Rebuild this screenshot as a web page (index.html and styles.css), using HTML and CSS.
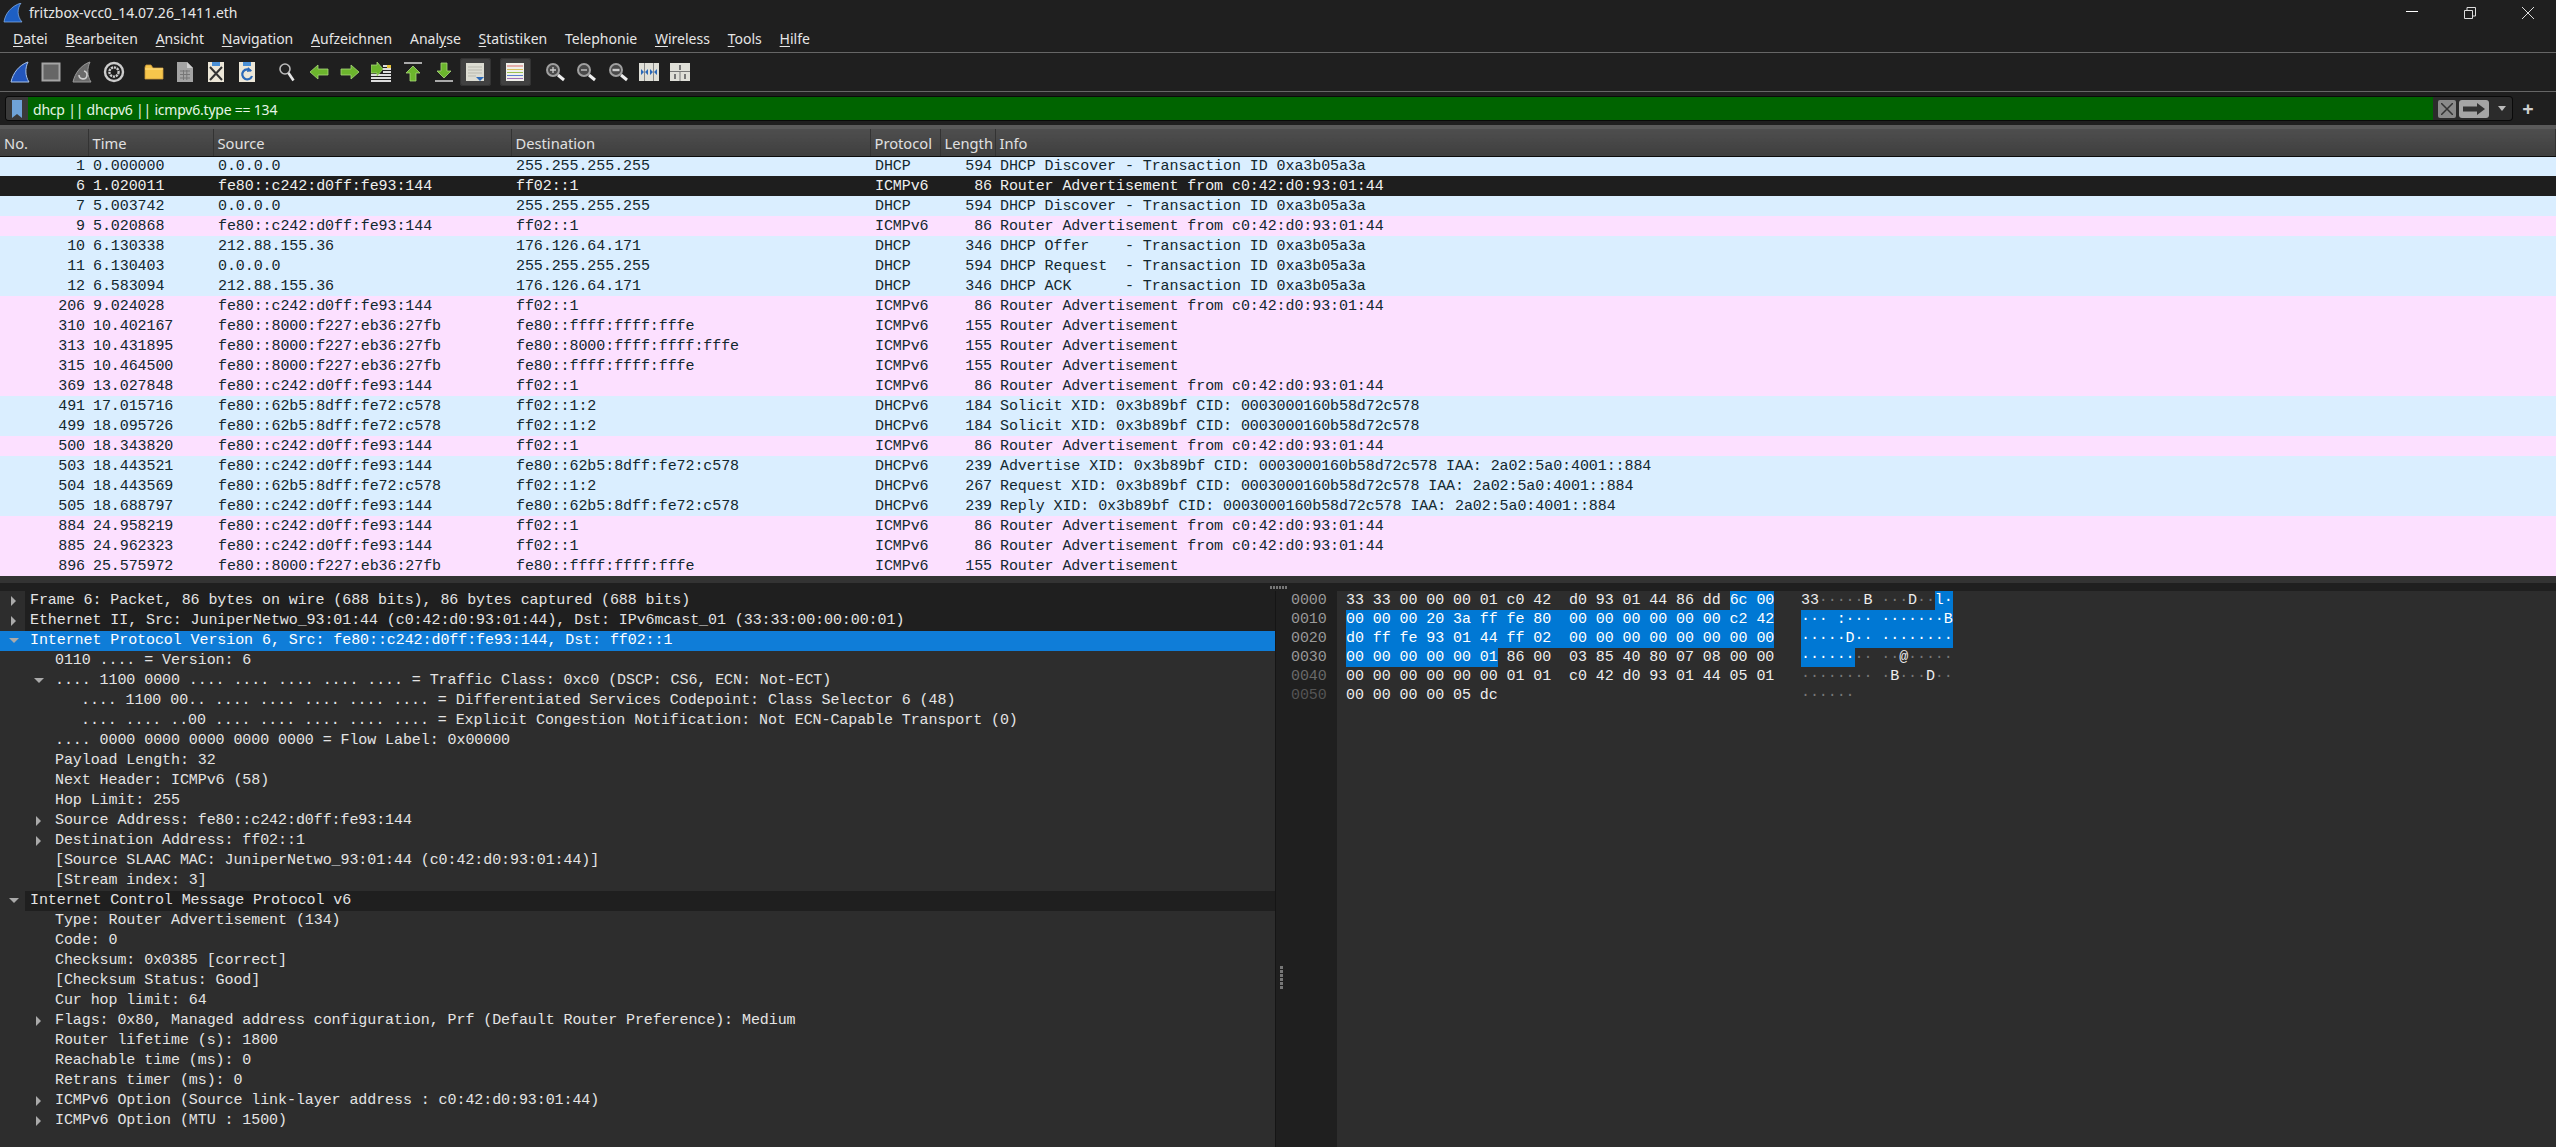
FILE: index.html
```html
<!DOCTYPE html>
<html lang="de">
<head>
  <meta charset="UTF-8" />
  <title>fritzbox-vcc0_14.07.26_1411.eth</title>
  <link rel="stylesheet" href="styles.css">
</head>
<body>
  <!-- Title bar -->
  <div class="titlebar">
    <svg class="app-icon" width="20" height="20" viewBox="0 0 20 20"><path d="M1 19C2 11 8 3 18 0C14 6 14 13 19 19Z" fill="#1d5fc4" stroke="#8db4e8" stroke-width=".7"/></svg>
    <span class="title-text">fritzbox-vcc0_14.07.26_1411.eth</span>
    <div class="window-btns">
      <svg width="14" height="14" viewBox="0 0 14 14"><path d="M1 5.5H13" stroke="#fff" stroke-width="1"/></svg>
      <svg width="14" height="14" viewBox="0 0 14 14"><path d="M1.5 4.5H9.5V12.5H1.5ZM4 4V1.5H12.5V10H10" fill="none" stroke="#ddd" stroke-width="1"/></svg>
      <svg width="14" height="14" viewBox="0 0 14 14"><path d="M1 1L13 13M13 1L1 13" stroke="#ddd" stroke-width="1"/></svg>
    </div>
  </div>

  <!-- Menu -->
  <div class="menubar">
    <span><u>D</u>atei</span>
    <span><u>B</u>earbeiten</span>
    <span><u>A</u>nsicht</span>
    <span><u>N</u>avigation</span>
    <span><u>A</u>ufzeichnen</span>
    <span>Anal<u>y</u>se</span>
    <span><u>S</u>tatistiken</span>
    <span>Telephonie</span>
    <span><u>W</u>ireless</span>
    <span><u>T</u>ools</span>
    <span><u>H</u>ilfe</span>
  </div>

  <!-- Toolbar -->
  <div class="toolbar">
    <div class="tool"><svg width="20" height="22" viewBox="0 0 20 22"><path d="M1 21C3 12 9 4 18 1C15 7 15 15 19 21Z" fill="#2356bb" stroke="#a9c3e8" stroke-width="1"/></svg></div>
    <div class="tool"><svg width="20" height="20" viewBox="0 0 20 20"><rect x="1.5" y="1.5" width="17" height="17" fill="#666" stroke="#a5a5a5" stroke-width="2"/></svg></div>
    <div class="tool"><svg width="20" height="22" viewBox="0 0 20 22"><path d="M1 21C3 12 9 4 18 1C15 7 15 15 19 21Z" fill="#6b6b6b" stroke="#999" stroke-width="1"/><path d="M7 14A4 4 0 1 0 12 10" fill="none" stroke="#ccc" stroke-width="1.6"/></svg></div>
    <div class="tool"><svg width="22" height="22" viewBox="0 0 22 22"><circle cx="11" cy="11" r="9" fill="none" stroke="#ccc" stroke-width="2.4"/><circle cx="11" cy="11" r="4.6" fill="none" stroke="#ccc" stroke-width="2.4" stroke-dasharray="2.2 .8"/></svg></div>
    <div class="tool-sep"></div>
    <div class="tool"><svg width="20" height="16" viewBox="0 0 20 16"><path d="M1 3V15H19V4H9L7 1H2Z" fill="#f6c64c" stroke="#c9973a" stroke-width=".8"/><path d="M1 5H19" stroke="#ffe08a"/></svg></div>
    <div class="tool"><svg width="18" height="22" viewBox="0 0 18 22"><path d="M1 1H11L17 7V21H1Z" fill="#a4a4a4"/><path d="M11 1V7H17" fill="#d0d0d0"/><path d="M4 10H14M4 13.500H14M4 17H14M7.500 9V19M10.800 9V19" stroke="#777" stroke-width="1"/></svg></div>
    <div class="tool"><svg width="18" height="22" viewBox="0 0 18 22"><path d="M1 1H17V21H1Z" fill="#ece7d8"/><path d="M5 1H13V5H5Z" fill="#4a90d6"/><path d="M3 6L15 19M15 6L3 19" stroke="#333" stroke-width="2"/></svg></div>
    <div class="tool"><svg width="18" height="22" viewBox="0 0 18 22"><path d="M1 1H17V21H1Z" fill="#ece7d8"/><path d="M5 1H13V5H5Z" fill="#4a90d6"/><path d="M13 10A5 5 0 1 0 14 15" fill="none" stroke="#2a68b8" stroke-width="2.200"/><path d="M10 6L14 10L9 11Z" fill="#2a68b8"/></svg></div>
    <div class="tool-sep"></div>
    <div class="tool"><svg width="18" height="20" viewBox="0 0 18 20"><circle cx="7" cy="7" r="5" fill="#222" stroke="#bbb" stroke-width="1.600"/><path d="M10.500 11L15.500 18.500" stroke="#e6e6e6" stroke-width="2.600"/></svg></div>
    <div class="tool"><svg width="20" height="16" viewBox="0 0 20 16"><path d="M1 8L9 1V5H19V11H9V15Z" fill="#6cb52d" stroke="#a8d87a" stroke-width=".8"/></svg></div>
    <div class="tool"><svg width="20" height="16" viewBox="0 0 20 16"><path d="M19 8L11 1V5H1V11H11V15Z" fill="#6cb52d" stroke="#a8d87a" stroke-width=".8"/></svg></div>
    <div class="tool"><svg width="20" height="20" viewBox="0 0 20 20"><path d="M0 13H20M0 16H20M0 19H20M12 4H20M12 7H20M12 10H20" stroke="#ddd" stroke-width="2"/><path d="M16 3H20V6H16Z" fill="#e8c53a"/><path d="M12 7L6 0V3H0V11H6V14Z" fill="#6cb52d" stroke="#a8d87a" stroke-width=".8"/></svg></div>
    <div class="tool"><svg width="18" height="20" viewBox="0 0 18 20"><path d="M0 1H18" stroke="#aaa" stroke-width="2"/><path d="M9 4L16 11H12V19H6V11H2Z" fill="#6cb52d" stroke="#a8d87a" stroke-width=".8"/></svg></div>
    <div class="tool"><svg width="18" height="20" viewBox="0 0 18 20"><path d="M0 19H18" stroke="#aaa" stroke-width="2"/><path d="M9 16L16 9H12V1H6V9H2Z" fill="#6cb52d" stroke="#a8d87a" stroke-width=".8"/></svg></div>
    <div class="tool checked"><svg width="20" height="20" viewBox="0 0 20 20"><path d="M1 1H19V19H1Z" fill="#dcdcd2"/><path d="M3 5H17M3 8H17M3 11H17M3 14H11" stroke="#b9b9ae"/><path d="M11 15H19L15 19Z" fill="#2a68b8"/></svg></div>
    <div class="tool-sep"></div>
    <div class="tool checked"><svg width="20" height="20" viewBox="0 0 20 20"><rect x="1" y="1" width="18" height="18" fill="#f0f0ea"/><path d="M2 4H18" stroke="#d96a6a"/><path d="M2 7.500H18" stroke="#d8c060"/><path d="M2 10.500H18" stroke="#9cc050"/><path d="M2 13.500H18" stroke="#5a7fd0"/><path d="M2 16.500H18" stroke="#a070b8"/></svg></div>
    <div class="tool-sep"></div>
    <div class="tool"><svg width="20" height="20" viewBox="0 0 20 20"><circle cx="8" cy="8" r="6" fill="#4a4a4a" stroke="#a0a0a0" stroke-width="2"/><path d="M5 8H11M8 5V11" stroke="#ccc" stroke-width="1.300"/><path d="M13 13L19 18" stroke="#eee" stroke-width="3"/></svg></div>
    <div class="tool"><svg width="20" height="20" viewBox="0 0 20 20"><circle cx="8" cy="8" r="6" fill="#4a4a4a" stroke="#a0a0a0" stroke-width="2"/><path d="M5 8H11" stroke="#ccc" stroke-width="1.300"/><path d="M13 13L19 18" stroke="#eee" stroke-width="3"/></svg></div>
    <div class="tool"><svg width="20" height="20" viewBox="0 0 20 20"><circle cx="8" cy="8" r="6" fill="#4a4a4a" stroke="#a0a0a0" stroke-width="2"/><path d="M4.500 8H11.500" stroke="#ccc" stroke-width="2.400"/><path d="M13 13L19 18" stroke="#eee" stroke-width="3"/></svg></div>
    <div class="tool"><svg width="20" height="18" viewBox="0 0 20 18"><rect width="20" height="18" fill="#dfdfd8"/><path d="M5.500 0V18M14.500 0V18" stroke="#888"/><path d="M2 6L5 9L2 12ZM9 6L6 9L9 12ZM11 6L14 9L11 12ZM18 6L15 9L18 12Z" fill="#2a68b8"/></svg></div>
    <div class="tool"><svg width="20" height="18" viewBox="0 0 20 18"><rect width="20" height="18" fill="#dfdfd8"/><path d="M0 8.500H20M10 8.500V18" stroke="#777"/><path d="M9 2H11V7H9ZM4 11H6V16H4ZM14 11H16V16H14Z" fill="#777"/></svg></div>
  </div>

  <!-- Display filter -->
  <div class="filterbar">
    <div class="filter-box">
      <div class="filter-bookmark"><svg width="10" height="18" viewBox="0 0 10 18"><path d="M0 0H10V18L5 14L0 18Z" fill="#6fa3d8"/></svg></div>
      <div class="filter-input">dhcp || dhcpv6 || icmpv6.type == 134</div>
      <div class="filter-clear"><svg width="12" height="12" viewBox="0 0 12 12"><path d="M0 0L12 12M12 0L0 12" stroke="#333" stroke-width="1.500"/></svg></div>
      <div class="filter-apply"><svg width="22" height="12" viewBox="0 0 22 12"><path d="M0 3.500H14V0L22 6L14 12V8.500H0Z" fill="#333"/></svg></div>
      <div class="filter-drop"></div>
    </div>
    <div class="filter-plus">+</div>
  </div>

  <!-- Packet list -->
  <table class="packets">
    <colgroup>
      <col class="c-no"><col class="c-time"><col class="c-src"><col class="c-dst"><col class="c-proto"><col class="c-len"><col>
    </colgroup>
    <thead>
      <tr><th>No.</th><th>Time</th><th>Source</th><th>Destination</th><th>Protocol</th><th>Length</th><th>Info</th></tr>
    </thead>
    <tbody>
      <tr class="udp"><td>1</td><td>0.000000</td><td>0.0.0.0</td><td>255.255.255.255</td><td>DHCP</td><td>594</td><td>DHCP Discover - Transaction ID 0xa3b05a3a</td></tr>
      <tr class="sel"><td>6</td><td>1.020011</td><td>fe80::c242:d0ff:fe93:144</td><td>ff02::1</td><td>ICMPv6</td><td>86</td><td>Router Advertisement from c0:42:d0:93:01:44</td></tr>
      <tr class="udp"><td>7</td><td>5.003742</td><td>0.0.0.0</td><td>255.255.255.255</td><td>DHCP</td><td>594</td><td>DHCP Discover - Transaction ID 0xa3b05a3a</td></tr>
      <tr class="icmp"><td>9</td><td>5.020868</td><td>fe80::c242:d0ff:fe93:144</td><td>ff02::1</td><td>ICMPv6</td><td>86</td><td>Router Advertisement from c0:42:d0:93:01:44</td></tr>
      <tr class="udp"><td>10</td><td>6.130338</td><td>212.88.155.36</td><td>176.126.64.171</td><td>DHCP</td><td>346</td><td>DHCP Offer    - Transaction ID 0xa3b05a3a</td></tr>
      <tr class="udp"><td>11</td><td>6.130403</td><td>0.0.0.0</td><td>255.255.255.255</td><td>DHCP</td><td>594</td><td>DHCP Request  - Transaction ID 0xa3b05a3a</td></tr>
      <tr class="udp"><td>12</td><td>6.583094</td><td>212.88.155.36</td><td>176.126.64.171</td><td>DHCP</td><td>346</td><td>DHCP ACK      - Transaction ID 0xa3b05a3a</td></tr>
      <tr class="icmp"><td>206</td><td>9.024028</td><td>fe80::c242:d0ff:fe93:144</td><td>ff02::1</td><td>ICMPv6</td><td>86</td><td>Router Advertisement from c0:42:d0:93:01:44</td></tr>
      <tr class="icmp"><td>310</td><td>10.402167</td><td>fe80::8000:f227:eb36:27fb</td><td>fe80::ffff:ffff:fffe</td><td>ICMPv6</td><td>155</td><td>Router Advertisement</td></tr>
      <tr class="icmp"><td>313</td><td>10.431895</td><td>fe80::8000:f227:eb36:27fb</td><td>fe80::8000:ffff:ffff:fffe</td><td>ICMPv6</td><td>155</td><td>Router Advertisement</td></tr>
      <tr class="icmp"><td>315</td><td>10.464500</td><td>fe80::8000:f227:eb36:27fb</td><td>fe80::ffff:ffff:fffe</td><td>ICMPv6</td><td>155</td><td>Router Advertisement</td></tr>
      <tr class="icmp"><td>369</td><td>13.027848</td><td>fe80::c242:d0ff:fe93:144</td><td>ff02::1</td><td>ICMPv6</td><td>86</td><td>Router Advertisement from c0:42:d0:93:01:44</td></tr>
      <tr class="udp"><td>491</td><td>17.015716</td><td>fe80::62b5:8dff:fe72:c578</td><td>ff02::1:2</td><td>DHCPv6</td><td>184</td><td>Solicit XID: 0x3b89bf CID: 0003000160b58d72c578</td></tr>
      <tr class="udp"><td>499</td><td>18.095726</td><td>fe80::62b5:8dff:fe72:c578</td><td>ff02::1:2</td><td>DHCPv6</td><td>184</td><td>Solicit XID: 0x3b89bf CID: 0003000160b58d72c578</td></tr>
      <tr class="icmp"><td>500</td><td>18.343820</td><td>fe80::c242:d0ff:fe93:144</td><td>ff02::1</td><td>ICMPv6</td><td>86</td><td>Router Advertisement from c0:42:d0:93:01:44</td></tr>
      <tr class="udp"><td>503</td><td>18.443521</td><td>fe80::c242:d0ff:fe93:144</td><td>fe80::62b5:8dff:fe72:c578</td><td>DHCPv6</td><td>239</td><td>Advertise XID: 0x3b89bf CID: 0003000160b58d72c578 IAA: 2a02:5a0:4001::884</td></tr>
      <tr class="udp"><td>504</td><td>18.443569</td><td>fe80::62b5:8dff:fe72:c578</td><td>ff02::1:2</td><td>DHCPv6</td><td>267</td><td>Request XID: 0x3b89bf CID: 0003000160b58d72c578 IAA: 2a02:5a0:4001::884</td></tr>
      <tr class="udp"><td>505</td><td>18.688797</td><td>fe80::c242:d0ff:fe93:144</td><td>fe80::62b5:8dff:fe72:c578</td><td>DHCPv6</td><td>239</td><td>Reply XID: 0x3b89bf CID: 0003000160b58d72c578 IAA: 2a02:5a0:4001::884</td></tr>
      <tr class="icmp"><td>884</td><td>24.958219</td><td>fe80::c242:d0ff:fe93:144</td><td>ff02::1</td><td>ICMPv6</td><td>86</td><td>Router Advertisement from c0:42:d0:93:01:44</td></tr>
      <tr class="icmp"><td>885</td><td>24.962323</td><td>fe80::c242:d0ff:fe93:144</td><td>ff02::1</td><td>ICMPv6</td><td>86</td><td>Router Advertisement from c0:42:d0:93:01:44</td></tr>
      <tr class="icmp"><td>896</td><td>25.575972</td><td>fe80::8000:f227:eb36:27fb</td><td>fe80::ffff:ffff:fffe</td><td>ICMPv6</td><td>155</td><td>Router Advertisement</td></tr>
    </tbody>
  </table>

  <div class="split-bar"></div>
  <div class="split-handle"><i></i><i></i><i></i><i></i><i></i><i></i></div>

  <div class="lower">
    <!-- Packet details -->
    <div class="details">
      <div class="row top closed">Frame 6: Packet, 86 bytes on wire (688 bits), 86 bytes captured (688 bits)</div>
      <div class="row top closed">Ethernet II, Src: JuniperNetwo_93:01:44 (c0:42:d0:93:01:44), Dst: IPv6mcast_01 (33:33:00:00:00:01)</div>
      <div class="row top open picked">Internet Protocol Version 6, Src: fe80::c242:d0ff:fe93:144, Dst: ff02::1</div>
      <div class="row d1">0110 .... = Version: 6</div>
      <div class="row d1 open">.... 1100 0000 .... .... .... .... .... = Traffic Class: 0xc0 (DSCP: CS6, ECN: Not-ECT)</div>
      <div class="row d2">.... 1100 00.. .... .... .... .... .... = Differentiated Services Codepoint: Class Selector 6 (48)</div>
      <div class="row d2">.... .... ..00 .... .... .... .... .... = Explicit Congestion Notification: Not ECN-Capable Transport (0)</div>
      <div class="row d1">.... 0000 0000 0000 0000 0000 = Flow Label: 0x00000</div>
      <div class="row d1">Payload Length: 32</div>
      <div class="row d1">Next Header: ICMPv6 (58)</div>
      <div class="row d1">Hop Limit: 255</div>
      <div class="row d1 closed">Source Address: fe80::c242:d0ff:fe93:144</div>
      <div class="row d1 closed">Destination Address: ff02::1</div>
      <div class="row d1">[Source SLAAC MAC: JuniperNetwo_93:01:44 (c0:42:d0:93:01:44)]</div>
      <div class="row d1">[Stream index: 3]</div>
      <div class="row top open">Internet Control Message Protocol v6</div>
      <div class="row d1">Type: Router Advertisement (134)</div>
      <div class="row d1">Code: 0</div>
      <div class="row d1">Checksum: 0x0385 [correct]</div>
      <div class="row d1">[Checksum Status: Good]</div>
      <div class="row d1">Cur hop limit: 64</div>
      <div class="row d1 closed">Flags: 0x80, Managed address configuration, Prf (Default Router Preference): Medium</div>
      <div class="row d1">Router lifetime (s): 1800</div>
      <div class="row d1">Reachable time (ms): 0</div>
      <div class="row d1">Retrans timer (ms): 0</div>
      <div class="row d1 closed">ICMPv6 Option (Source link-layer address : c0:42:d0:93:01:44)</div>
      <div class="row d1 closed">ICMPv6 Option (MTU : 1500)</div>
    </div>

    <!-- Packet bytes -->
    <div class="bytes-gutter">
      <div class="vhandle"><i></i><i></i><i></i><i></i><i></i><i></i></div>
      <div class="offsets">
        <div>0000</div><div>0010</div><div>0020</div><div>0030</div><div class="dim">0040</div><div class="dimmer">0050</div>
      </div>
    </div>
    <div class="bytes">
      <div class="hex">
        <div>33 33 00 00 00 01 c0 42  d0 93 01 44 86 dd <b>6c 00</b></div>
        <div><b>00 00 00 20 3a ff fe 80  00 00 00 00 00 00 c2 42</b></div>
        <div><b>d0 ff fe 93 01 44 ff 02  00 00 00 00 00 00 00 00</b></div>
        <div><b>00 00 00 00 00 01</b> 86 00  03 85 40 80 07 08 00 00</div>
        <div>00 00 00 00 00 00 01 01  c0 42 d0 93 01 44 05 01</div>
        <div>00 00 00 00 05 dc</div>
      </div>
      <div class="ascii">
        <div>33<s>·····</s>B <s>···</s>D<s>··</s><b>l·</b></div>
        <div><b>··· :··· ·······B</b></div>
        <div><b>·····D·· ········</b></div>
        <div><b>······</b><s>·· ··</s>@<s>·····</s></div>
        <div><s>········ ·</s>B<s>···</s>D<s>··</s></div>
        <div><s>······</s></div>
      </div>
    </div>
  </div>
</body>
</html>
```

FILE: styles.css
```css
html, body {
  margin: 0;
  padding: 0;
  width: 100%;
  height: 100%;
  overflow: hidden;
  background: #1f1f1f;
  color: #e6e6e6;
  font-family: "Noto Sans", sans-serif;
  font-size: 14px;
}
body {
  display: flex;
  flex-direction: column;
}

/* title + menu */
.titlebar {
  height: 26px;
  display: flex;
  align-items: center;
  padding-left: 3px;
  background: #1f1f1f;
}
.app-icon {
  margin-right: 6px;
}
.title-text {
  color: #e8e8e8;
  padding-bottom: 2px;
}
.window-btns {
  margin-left: auto;
  display: flex;
  gap: 44px;
  padding-right: 21px;
}
.menubar {
  display: flex;
  align-items: center;
  gap: 17.8px;
  padding-left: 13px;
  padding-bottom: 2px;
  box-sizing: border-box;
  height: 27px;
  border-bottom: 1px solid #666;
}
.menubar u {
  text-underline-offset: 2px;
}

/* toolbar */
.toolbar {
  height: 38px;
  display: flex;
  align-items: center;
  padding-left: 4px;
  border-bottom: 1px solid #666;
}
.tool {
  width: 31.3px;
  height: 28px;
  display: flex;
  align-items: center;
  justify-content: center;
  flex: none;
}
.tool.checked {
  background: #414141;
  border-radius: 3px;
  box-shadow: inset 0 0 0 1px #333;
}
.tool-sep {
  width: 8.7px;
  flex: none;
}

/* filter */
.filterbar {
  height: 33px;
  display: flex;
  align-items: center;
  padding-left: 6px;
  border-bottom: 4px solid #5a5a5a;
  box-sizing: content-box;
}
.filter-box {
  width: 2506px;
  height: 23px;
  display: flex;
  align-items: stretch;
  background: #2b2b2b;
  border-radius: 3px;
  box-shadow: 0 0 0 1px #0a0a0a;
}
.filter-bookmark {
  width: 22px;
  display: flex;
  align-items: center;
  justify-content: center;
  background: #3a3a3a;
  border-radius: 3px 0 0 3px;
}
.filter-input {
  flex: 1;
  background: #006400;
  color: #e6f5e6;
  padding-left: 5px;
  line-height: 25px;
  letter-spacing: -0.22px;
}
.filter-clear {
  width: 18px;
  margin: 3px 0 2px 5px;
  display: flex;
  align-items: center;
  justify-content: center;
  background: #8a8a8a;
  border-radius: 2px;
}
.filter-apply {
  width: 30px;
  margin: 3px 0 2px 3px;
  display: flex;
  align-items: center;
  justify-content: center;
  background: #a5a5a5;
  border-radius: 3px;
}
.filter-drop {
  width: 23px;
  position: relative;
}
.filter-drop::after {
  content: "";
  position: absolute;
  left: 9px;
  top: 9px;
  border-left: 4px solid transparent;
  border-right: 4px solid transparent;
  border-top: 5px solid #bbb;
}
.filter-plus {
  width: 32px;
  text-align: center;
  font-size: 20px;
  font-weight: 700;
  line-height: 23px;
  color: #d0d0d0;
}

/* packet list */
.packets {
  table-layout: fixed;
  width: 2556px;
  border-collapse: collapse;
  font-family: "Liberation Mono", monospace;
  font-size: 15px;
  letter-spacing: -0.08px;
  color: #12272e;
  flex: none;
}
.c-no { width: 88px; }
.c-time { width: 125px; }
.c-src { width: 298px; }
.c-dst { width: 359px; }
.c-proto { width: 70px; }
.c-len { width: 55px; }
.packets th {
  height: 27px;
  padding: 1px 0 0 4px;
  box-sizing: border-box;
  text-align: left;
  font-family: "Noto Sans", sans-serif;
  font-size: 14.7px;
  font-weight: 400;
  letter-spacing: 0;
  color: #e0e0e0;
  background: linear-gradient(#4e4e4e, #3f3f3f);
  border-right: 1px solid #333;
  border-bottom: 1px solid #0c0c0c;
}
.packets td {
  height: 20px;
  padding: 0 0 0 5px;
  box-sizing: border-box;
  white-space: pre;
  overflow: hidden;
}
.packets td:first-child,
.packets td:nth-child(6) {
  text-align: right;
  padding: 0 3px 0 0;
}
.udp { background: #daeeff; }
.icmp { background: #fce0ff; }
.sel {
  background: #1e1e1e;
  color: #f0f0f0;
}

/* splitters */
.split-bar {
  height: 7px;
  background: #333;
  flex: none;
}
.split-handle {
  height: 8px;
  display: flex;
  justify-content: center;
  align-items: center;
  gap: 1px;
  flex: none;
}
.split-handle i {
  width: 2px;
  height: 3px;
  background: #777;
}

/* lower panes */
.lower {
  flex: 1;
  display: flex;
  min-height: 0;
  font-family: "Liberation Mono", monospace;
  font-size: 15px;
  letter-spacing: -0.08px;
}
.details {
  width: 1276px;
  flex: none;
  background: #2d2d2d;
  border-right: 1px solid #151515;
  box-sizing: border-box;
  color: #e4e4e4;
}
.row {
  height: 20px;
  line-height: 20px;
  white-space: pre;
  position: relative;
}
.row.top {
  padding-left: 30px;
  background: linear-gradient(90deg, #2d2d2d 25px, #1f1f1f 25px);
}
.row.top.picked {
  background: #0f7dd8;
  color: #fff;
}
.row.d1 { padding-left: 55px; }
.row.d2 { padding-left: 81px; }
.row.closed::before,
.row.open::before {
  content: "";
  position: absolute;
  top: 5px;
  border-style: solid;
  border-color: transparent;
}
.row.closed::before {
  border-width: 5px 0 5px 5px;
  border-left-color: #aaa;
}
.row.open::before {
  top: 7px;
  border-width: 5px 5px 0 5px;
  border-top-color: #aaa;
}
.row.top.closed::before { left: 11px; }
.row.top.open::before { left: 9px; }
.row.d1.closed::before { left: 36px; }
.row.d1.open::before { left: 34px; }

/* bytes pane */
.bytes-gutter {
  width: 61px;
  flex: none;
  background: #1f1f1f;
  position: relative;
  color: #999;
}
.vhandle {
  position: absolute;
  left: 4px;
  top: 375px;
  display: flex;
  flex-direction: column;
  gap: 1px;
}
.vhandle i {
  width: 3px;
  height: 3px;
  background: #777;
}
.offsets {
  padding-left: 15px;
}
.offsets div {
  height: 19px;
  line-height: 19px;
}
.offsets .dim { color: #6a6a6a; }
.offsets .dimmer { color: #555; }
.bytes {
  flex: 1;
  display: flex;
  background: #2d2d2d;
  color: #eee;
  padding-left: 9px;
}
.hex div, .ascii div {
  height: 19px;
  line-height: 19px;
  white-space: pre;
}
.hex { width: 455px; }
.bytes b {
  display: inline-block;
  height: 19px;
  font-weight: 400;
  color: #fff;
  background: #0078d4;
}
.ascii s {
  text-decoration: none;
  color: #777;
}
```
